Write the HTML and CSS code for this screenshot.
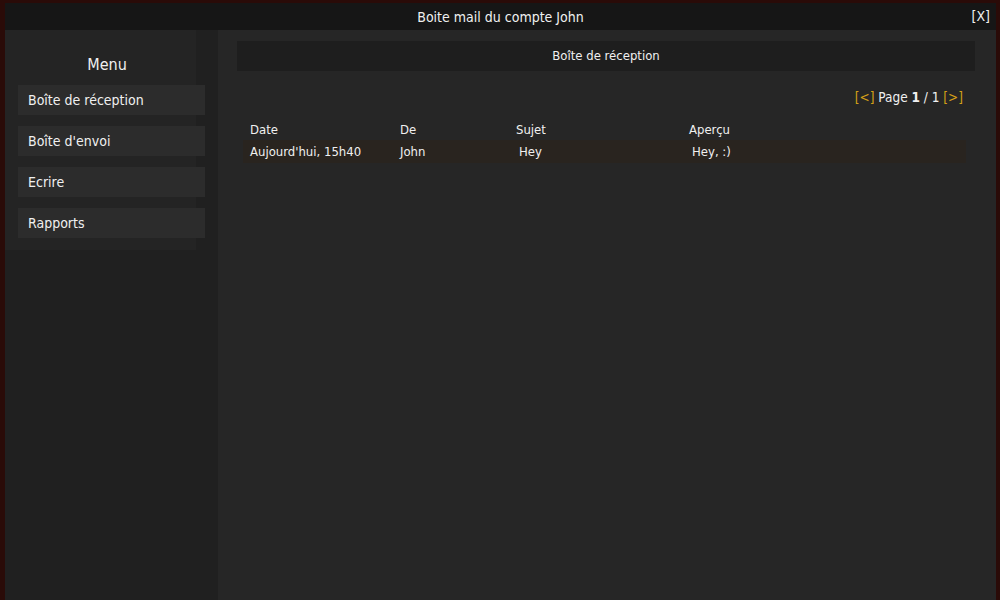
FILE: index.html
```html
<!DOCTYPE html>
<html lang="fr">
<head>
<meta charset="utf-8">
<title>Boite mail</title>
<link rel="stylesheet" href="styles.css">
</head>
<body>
<div class="modal">
  <div class="header">
    <span class="title">Boite mail du compte John</span>
    <span class="close">[X]</span>
  </div>
  <div class="content">
    <aside class="sidebar">
      <div class="menu-box">
        <div class="menu-title">Menu</div>
        <div class="menu-item">Boîte de réception</div>
        <div class="menu-item">Boîte d'envoi</div>
        <div class="menu-item">Ecrire</div>
        <div class="menu-item">Rapports</div>
      </div>
    </aside>
    <main class="main">
      <div class="section-title">Boîte de réception</div>
      <div class="pager"><span class="nav">[&lt;]</span> Page <b>1</b> / 1 <span class="nav">[&gt;]</span></div>
      <div class="table">
        <div class="row head">
          <span class="c-date">Date</span>
          <span class="c-de">De</span>
          <span class="c-sujet">Sujet</span>
          <span class="c-apercu">Aperçu</span>
        </div>
        <div class="row mail">
          <span class="c-date">Aujourd'hui, 15h40</span>
          <span class="c-de">John</span>
          <span class="c-sujet shift">Hey</span>
          <span class="c-apercu shift">Hey, :)</span>
        </div>
      </div>
    </main>
  </div>
</div>
</body>
</html>
```
FILE: styles.css
```css
* { box-sizing: border-box; }
html, body { margin: 0; height: 100%; overflow: hidden; }
body {
  background: #2a0b08;
  font-family: "DejaVu Sans Condensed", "DejaVu Sans", sans-serif;
  color: #f0f0f0;
  font-size: 13px;
}
.modal {
  margin: 3px 4px 0 5px;
  height: 620px;
  display: flex;
  flex-direction: column;
  background: #262626;
}
.header {
  height: 27px;
  flex: none;
  background: #161616;
  display: flex;
  align-items: center;
  justify-content: center;
  position: relative;
  font-size: 14px;
}
.close {
  position: absolute;
  right: 6px;
  top: 5px;
  font-size: 14px;
}
.content {
  flex: 1;
  display: flex;
}
.sidebar {
  width: 213px;
  flex: none;
  background: #202020;
}
.menu-box {
  width: 191px;
  height: 220px;
  background: #242424;
  padding: 24px 0 0 13px;
}
.menu-title {
  width: 178px;
  text-align: center;
  font-size: 16px;
  height: 31px;
  line-height: 22px;
}
.menu-item {
  width: 187px;
  height: 30px;
  background: #2c2c2c;
  margin-bottom: 11px;
  padding-left: 10px;
  line-height: 30px;
  font-size: 14px;
}
.main {
  flex: 1;
  padding: 11px 21px 0 19px;
}
.section-title {
  height: 30px;
  background: #1e1e1e;
  text-align: center;
  line-height: 30px;
  font-size: 13px;
}
.pager {
  text-align: right;
  padding-right: 12px;
  margin-top: 18px;
  line-height: 16px;
  font-size: 13.5px;
}
.pager .nav { color: #d4a017; }
.table {
  margin-top: 13px;
  padding: 0 9px 0 6px;
}
.row {
  display: flex;
  height: 23px;
  align-items: center;
  padding-left: 7px;
}
.row.head { height: 22px; }
.row.mail { background: #29241f; }
.c-date { width: 150px; }
.c-de { width: 116px; }
.c-sujet { width: 173px; }
.shift { padding-left: 3px; }
```
